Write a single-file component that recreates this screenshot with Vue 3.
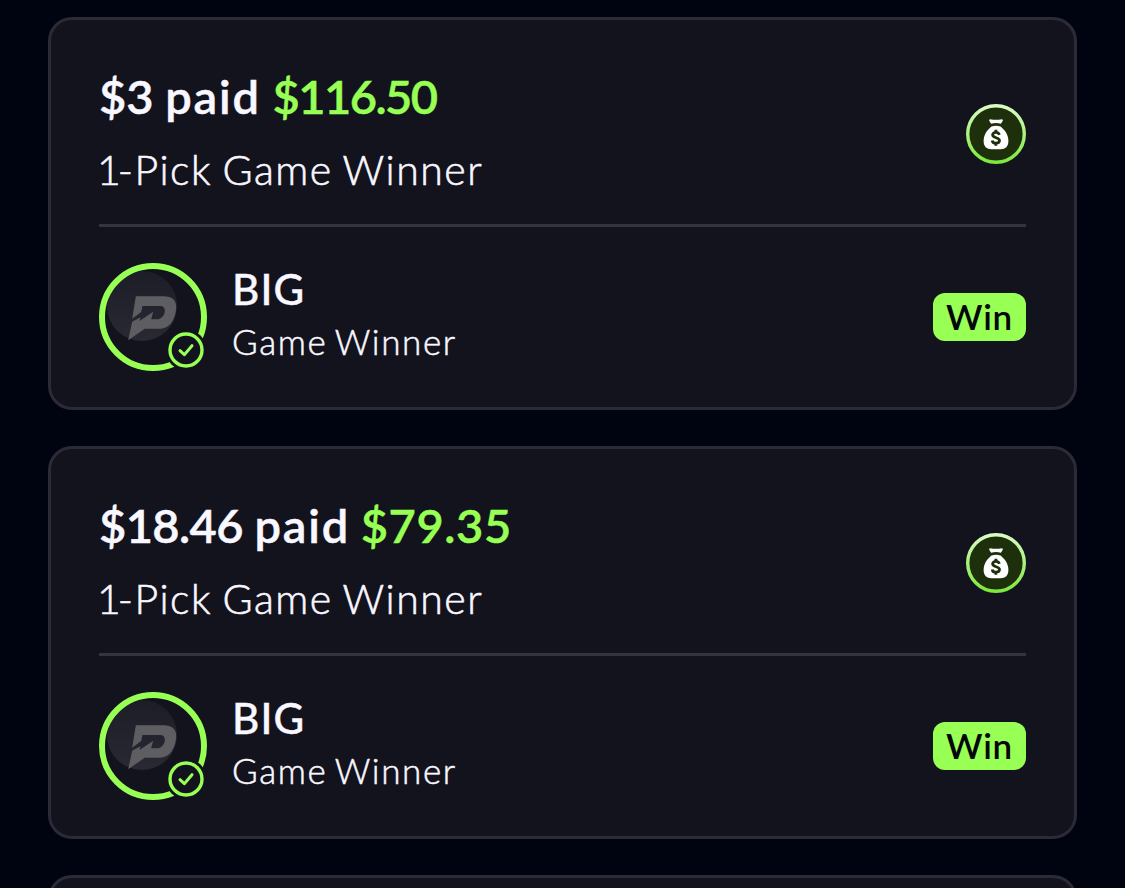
<script setup>
const entries = [
  { id: 1, stake: '$3', payout: '$116.50', type: '1-Pick Game Winner', team: 'BIG', market: 'Game Winner', result: 'Win' },
  { id: 2, stake: '$18.46', payout: '$79.35', type: '1-Pick Game Winner', team: 'BIG', market: 'Game Winner', result: 'Win' }
]
</script>

<template>
  <div class="page">
    <div class="list">
      <div v-for="entry in entries" :key="entry.id" class="card">
        <div class="summary">
          <div class="summary-text">
            <div class="title" :class="'title-' + entry.id">
              <span class="stake">{{ entry.stake }}</span> <span class="paid">paid</span> <span class="payout">{{ entry.payout }}</span>
            </div>
            <div class="subtitle">{{ entry.type }}</div>
          </div>
          <svg class="money" viewBox="0 0 60 60">
            <defs>
              <linearGradient :id="'ring-' + entry.id" x1="0" y1="0" x2="0" y2="1">
                <stop offset="0" stop-color="#d9fbc4" />
                <stop offset="1" stop-color="#7de83c" />
              </linearGradient>
            </defs>
            <circle cx="30" cy="30" r="28.3" fill="#1d300b" :stroke="`url(#ring-${entry.id})`" stroke-width="3.4" />
            <path d="M24.200 15.200q5.800 1 11.600 0q1.500.1 1 1.500l-1.900 3q-4.900-1.200-9.800 0l-1.900-3q-.5-1.400 1-1.500z" fill="#fff" />
            <path d="M25.500 22.500q4.500-1.500 9 0c4.500 3.500 7.900 8.500 7.900 14.500c0 5.500-3 8.200-7.900 8.200h-9c-4.900 0-7.900-2.700-7.900-8.200c0-6 3.400-11 7.900-14.500z" fill="#fff" />
            <path d="M33.300 30.800q-.6-2.500-3.400-2.500t-3.300 2.500c0 4 6.900 1.900 6.900 5.800q-.3 2.600-3.600 2.600t-3.700-2.700M29.900 25.800v2.500M29.900 39.200v2.500" class="dollar" />
          </svg>
        </div>

        <div class="pick">
          <svg class="avatar" viewBox="0 0 108 108">
            <defs>
              <linearGradient :id="'disc-' + entry.id" x1="0" y1="0" x2="0" y2="1">
                <stop offset="0" stop-color="#1d1d28" />
                <stop offset="1" stop-color="#292934" />
              </linearGradient>
              <mask :id="'cut-' + entry.id">
                <rect width="108" height="108" fill="#fff" />
                <circle cx="87" cy="87" r="20.500" fill="#000" />
              </mask>
            </defs>
            <circle cx="43" cy="43" r="35" :fill="`url(#disc-${entry.id})`" />
            <g transform="translate(-9.5 -8) scale(.33333)">
              <path d="M139 124H222C249 124 262 137 260 160C258 190 242 221 214 221H166L116 256L128 200L153 187L150 198L191 170L185 193H202C215 193 226 181 226 168C226 157 220 153 210 153H159L155 171L128 191Z" class="logo" />
            </g>
            <circle cx="54" cy="54" r="51" class="ring" :mask="`url(#cut-${entry.id})`" />
            <circle cx="87" cy="87" r="16" class="badge" />
            <path d="M81 87.700l4.300 4l7.700-9" class="check" />
          </svg>
          <div class="pick-text">
            <div class="team">{{ entry.team }}</div>
            <div class="market">{{ entry.market }}</div>
          </div>
          <div class="result">{{ entry.result }}</div>
        </div>
      </div>
      <div class="card"></div>
    </div>
  </div>
</template>

<style>
body {
  background-color: #000411;
}
</style>

<style scoped>
.page {
  height: 888px;
  overflow: hidden;
  font-family: Lato, "Liberation Sans", sans-serif;
  color: #f9f7ff;
}

.list {
  display: flex;
  flex-direction: column;
  gap: 36px;
  padding: 17px 48px 0;
}

.card {
  box-sizing: border-box;
  height: 393px;
  flex-shrink: 0;
  padding: 48px 48px 0;
  background-color: #13131e;
  border: 3px solid #2b2a36;
  border-radius: 24px;
}

.summary {
  display: flex;
  align-items: center;
  justify-content: space-between;
  height: 132px;
  padding-bottom: 24px;
  border-bottom: 3px solid #34343f;
}

.summary-text {
  display: flex;
  flex-direction: column;
  gap: 14px;
  margin-top: -2px;
  white-space: nowrap;
}

.title {
  font-size: 47px;
  font-weight: 600;
  line-height: 60px;
  -webkit-text-stroke: 0.5px currentColor;
}

.paid {
  letter-spacing: 1.8px;
}

.payout {
  color: #98ff54;
  letter-spacing: 0.6px;
}

.title-1 .payout {
  letter-spacing: -1.5px;
}

.title-2 .stake {
  letter-spacing: -0.6px;
}

.title-2 .payout {
  margin-left: -1px;
}

.subtitle {
  margin-left: -2px;
  font-size: 41px;
  font-weight: 300;
  line-height: 60px;
  letter-spacing: 1.5px;
  word-spacing: -2px;
  -webkit-text-stroke: 0.6px #f9f7ff;
}

.subtitle::first-letter {
  letter-spacing: -3px;
}

.money {
  width: 60px;
  height: 60px;
}

.dollar {
  fill: none;
  stroke: #1d300b;
  stroke-width: 2.8;
}

.pick {
  display: flex;
  align-items: center;
  height: 108px;
  padding-top: 36px;
}

.avatar {
  width: 108px;
  height: 108px;
  margin-right: 25px;
}

.logo {
  fill: #5d5d62;
}

.ring {
  fill: none;
  stroke: #98ff54;
  stroke-width: 6;
}

.badge {
  fill: #13131e;
  stroke: #98ff54;
  stroke-width: 3.4;
}

.check {
  fill: none;
  stroke: #98ff54;
  stroke-width: 3;
  stroke-linecap: round;
  stroke-linejoin: round;
}

.pick-text {
  flex: 1;
  padding-bottom: 5px;
}

.team {
  font-size: 42px;
  font-weight: 500;
  line-height: 52px;
  letter-spacing: 1.2px;
  -webkit-text-stroke: 0.4px #f9f7ff;
}

.market {
  font-size: 35px;
  font-weight: 300;
  line-height: 52px;
  letter-spacing: 1.6px;
  word-spacing: -3px;
  -webkit-text-stroke: 0.5px #f9f7ff;
}

.result {
  width: 93px;
  height: 48px;
  border-radius: 12px;
  background-color: #98ff54;
  color: #02080a;
  font-size: 35px;
  font-weight: 600;
  line-height: 47px;
  letter-spacing: 0.8px;
  text-align: center;
}
</style>
